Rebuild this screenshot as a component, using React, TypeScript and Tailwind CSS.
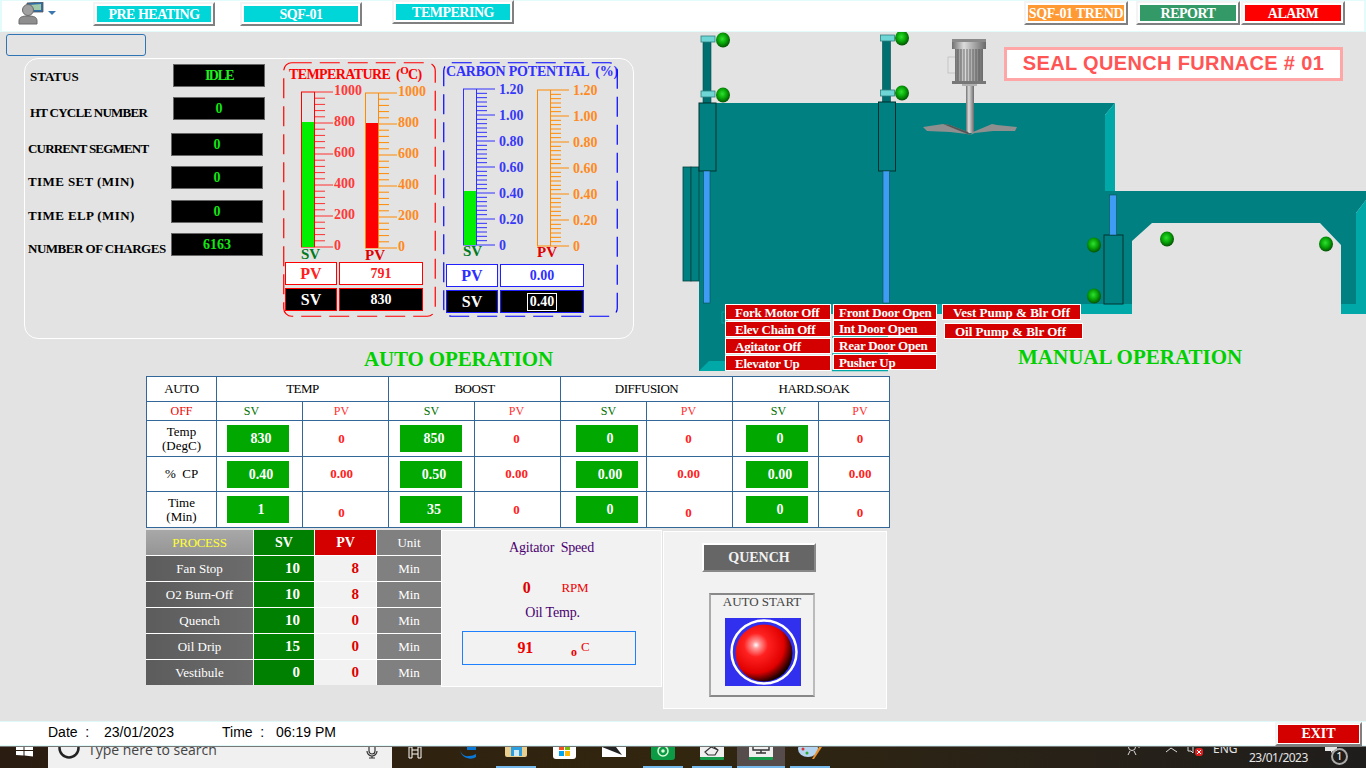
import type { ReactNode } from "react";

const serif = { fontFamily: '"Liberation Serif", "Times New Roman", serif' };

function HeadButton({ label, bg, className, tracking = "tracking-[-0.5px]" }: { label: string; bg: string; className: string; tracking?: string }) {
  return (
    <button
      className={`h-[24px] border-2 border-[#f4f4f4] border-r-[#808080] border-b-[#808080] p-[2px] ${className}`}
    >
      <span className={`flex h-full w-full items-center justify-center text-[14px] font-bold whitespace-nowrap text-white ${tracking} ${bg}`}>
        {label}
      </span>
    </button>
  );
}

function Ball({ cx, cy }: { cx: number; cy: number }) {
  return <ellipse cx={cx} cy={cy} rx={7} ry={7.5} fill="url(#ball)" />;
}

function Cylinder({ x, top, housingTop, housingBottom, rodBottom }: { x: number; top: number; housingTop: number; housingBottom: number; rodBottom: number }) {
  return (
    <g>
      <rect x={x + 4} y={top} width={8} height={housingTop - top} fill="#006f6f" stroke="#004d4d" strokeWidth={0.6} />
      <rect x={x + 2} y={top - 4} width={14} height={6} fill="#6fd6d6" stroke="#2f7f7f" strokeWidth={0.8} />
      <rect x={x + 2} y={housingTop - 12} width={14} height={6} fill="#6fd6d6" stroke="#2f7f7f" strokeWidth={0.8} />
      <rect x={x} y={housingTop} width={17} height={housingBottom - housingTop} fill="#008080" stroke="#00302f" strokeWidth={1} />
      <rect x={x + 4.5} y={housingBottom} width={6.5} height={rodBottom - housingBottom} fill="#3f9cf5" stroke="#0d4f4f" strokeWidth={0.6} />
    </g>
  );
}

// furnace body, cylinders and agitator, coordinates are page pixels minus the 680,32 origin
function FurnaceDrawing() {
  const o = (x: number, y: number) => `${x - 680},${y - 32}`;
  return (
    <svg width={686} height={344} className="block">
      <defs>
        <radialGradient id="ball" cx="45%" cy="42%" r="60%">
          <stop offset="0%" stopColor="#30e030" />
          <stop offset="50%" stopColor="#08a808" />
          <stop offset="100%" stopColor="#034c03" />
        </radialGradient>
        <linearGradient id="motor" x1="0" x2="1" y1="0" y2="0">
          <stop offset="0%" stopColor="#707070" />
          <stop offset="35%" stopColor="#dcdcdc" />
          <stop offset="100%" stopColor="#6a6a6a" />
        </linearGradient>
      </defs>
      {/* main tank */}
      <polygon
        points={[o(699, 103), o(1115, 103), o(1105, 115), o(1105, 191), o(1115, 191), o(1366, 191), o(1366, 200), o(1356, 213), o(1356, 304), o(1341, 304), o(1341, 245), o(1320, 223), o(1152, 223), o(1132, 241), o(1132, 304), o(699, 304)].join(" ")}
        fill="#008080"
      />
      <polygon points={[o(1105, 115), o(1115, 103), o(1115, 191), o(1105, 191)].join(" ")} fill="#00a8a8" />
      <polygon points={[o(1356, 213), o(1366, 200), o(1366, 314), o(1341, 314), o(1341, 304), o(1356, 304)].join(" ")} fill="#00a8a8" />
      <rect x={699 - 680} y={304 - 32} width={1132 - 699} height={10} fill="#00a8a8" />
      <polygon points={[o(699, 304), o(725, 304), o(725, 371), o(699, 371)].join(" ")} fill="#008080" />
      <polygon points={[o(699, 371), o(709, 361), o(725, 361), o(725, 371)].join(" ")} fill="#00a8a8" />
      <rect x={722 - 680} y={312 - 32} width={5} height={11} fill="none" stroke="#00a8a8" strokeWidth={0.8} />
      <polyline points={[o(832, 337), o(888, 337)].join(" ")} stroke="#00a8a8" strokeWidth={1.5} />
      <polyline points={[o(832, 354), o(888, 354)].join(" ")} stroke="#00a8a8" strokeWidth={1.5} />
      <polyline points={[o(832, 370.5), o(888, 370.5)].join(" ")} stroke="#00a8a8" strokeWidth={1.5} />

      {/* side doors */}
      <rect x={683 - 680} y={167 - 32} width={8} height={114} fill="#008080" stroke="#00403f" strokeWidth={0.8} />
      <rect x={691 - 680} y={167 - 32} width={8} height={114} fill="#008080" stroke="#00403f" strokeWidth={0.8} />

      <Cylinder x={19} top={8} housingTop={71} housingBottom={139} rodBottom={271} />
      <Cylinder x={198.5} top={7} housingTop={70} housingBottom={139} rodBottom={271} />
      <rect x={1104 - 680} y={235 - 32} width={19} height={69} fill="#008080" stroke="#00302f" strokeWidth={1} />
      <rect x={1109.5 - 680} y={195 - 32} width={7} height={40} fill="#3f9cf5" stroke="#0d4f4f" strokeWidth={0.6} />

      <Ball cx={43} cy={8} />
      <Ball cx={43} cy={63} />
      <Ball cx={222} cy={6} />
      <Ball cx={222} cy={61} />
      <Ball cx={414} cy={213} />
      <Ball cx={414} cy={264} />
      <Ball cx={487} cy={207} />
      <Ball cx={646} cy={212} />

      {/* agitator motor */}
      <rect x={268} y={25} width={9} height={16} fill="#e4e4e4" stroke="#a8a8a8" strokeWidth={0.5} />
      <rect x={272} y={7} width={34} height={3} fill="#8a8a8a" />
      <rect x={272} y={10} width={34} height={7} fill="url(#motor)" />
      <rect x={275} y={17} width={28} height={32} fill="url(#motor)" />
      {[278, 281, 284, 287, 290, 293, 296, 299].map((x) => (
        <line key={x} x1={x} x2={x} y1={17} y2={49} stroke="#555555" strokeWidth={0.8} />
      ))}
      <rect x={272} y={49} width={34} height={3} fill="#777777" />
      <rect x={282} y={52} width={15} height={2} fill="#b0b0b0" />
      <rect x={286} y={54} width={8} height={47} fill="url(#motor)" />
      <polygon points="243,95 263,92 270,93 288,100 290,103 287,102 270,100 247,99" fill="#8f8f8f" />
      <polygon points="337,95 317,93 312,92 293,100 290,103 295,101 313,99 335,99" fill="#8f8f8f" />
      <polygon points="263,92 270,93 288,100 290,103 280,99" fill="#555555" />
    </svg>
  );
}

function RedButton({ label, className }: { label: string; className: string }) {
  return (
    <div
      className={`absolute flex h-[16px] items-center border border-white bg-[#d40000] text-[13px] leading-none font-bold whitespace-nowrap text-white ${className}`}
    >
      {label}
    </div>
  );
}

function StatusRow({ label, value, labelClass, rowClass, valueClass = "text-[#14e614]" }: { label: string; value: string; labelClass: string; rowClass: string; valueClass?: string }) {
  return (
    <div className={`flex h-[23px] items-center ${rowClass}`}>
      <span className={`w-[143px] text-[13px] font-bold whitespace-nowrap text-black ${labelClass}`}>{label}</span>
      <span className={`flex h-[23px] w-[92px] items-center justify-center border border-[#666] bg-black text-[14px] font-bold ${valueClass}`}>
        {value}
      </span>
    </div>
  );
}

function Gauge({ labels, sub, majorGap, fillTo, fillColor, barColor, tickColor, labelColor, tag, tagColor, labelX, labelDy, tagDy }: { labels: string[]; sub: number; majorGap: number; fillTo: number; fillColor: string; barColor: string; tickColor: string; labelColor: string; tag: string; tagColor: string; labelX: number; labelDy: number; tagDy: number }) {
  const total = majorGap * (labels.length - 1);
  const ticks: ReactNode[] = [];
  for (let i = 0; i < labels.length; i++) {
    const y = 1 + i * majorGap;
    ticks.push(<line key={`m${i}`} x1={14} x2={32} y1={y} y2={y} stroke={tickColor} />);
    ticks.push(
      <text key={`t${i}`} x={labelX} y={y + labelDy} fill={labelColor} fontSize={14} fontWeight={700} style={serif}>
        {labels[i]}
      </text>,
    );
    if (i < labels.length - 1) {
      for (let s = 1; s < sub; s++) {
        const yy = y + (s * majorGap) / sub;
        ticks.push(<line key={`s${i}-${s}`} x1={14} x2={24} y1={yy} y2={yy} stroke={tickColor} />);
      }
    }
  }
  return (
    <svg width={60} height={total + 18} className="block shrink-0 overflow-visible">
      <rect x={0.5} y={1} width={13} height={total} fill="none" stroke={barColor} />
      {fillTo > 0 && <rect x={1} y={1 + fillTo} width={12} height={total - fillTo} fill={fillColor} />}
      {ticks}
      <text x={0} y={total + tagDy} fill={tagColor} fontSize={15} fontWeight={700} style={serif}>
        {tag}
      </text>
    </svg>
  );
}

function DashedFrame({ width, height, color }: { width: number; height: number; color: string }) {
  return (
    <svg width={width} height={height} className="pointer-events-none absolute top-0 left-0">
      <rect x={0.75} y={0.75} width={width - 1.5} height={height - 1.5} rx={8} fill="none" stroke={color} strokeWidth={1.2} strokeDasharray="20 8" />
    </svg>
  );
}

function ValueRow({ label, value, border, dark, text }: { label: string; value: ReactNode; border: string; dark?: boolean; text: string }) {
  const bg = dark ? "bg-black text-white" : `bg-white ${text}`;
  return (
    <div className="flex gap-[2px]">
      <div className={`flex h-[23px] w-[52px] items-center justify-center border-[1.5px] text-[16px] font-bold ${border} ${bg}`}>{label}</div>
      <div className={`flex h-[23px] w-[84px] items-center justify-center border-[1.5px] text-[14px] font-bold ${border} ${bg}`}>{value}</div>
    </div>
  );
}

const recipeCols = [
  { sv: "830", cp: "0.40", time: "1", ml: "ml-[10px]", svHead: "pr-[16px]", pvPad: "pr-[8px]", timePad: "pt-[6px]" },
  { sv: "850", cp: "0.50", time: "35", ml: "ml-[11px]", svHead: "", pvPad: "pr-[2px]", timePad: "pt-0" },
  { sv: "0", cp: "0.00", time: "0", ml: "ml-[15px]", svHead: "pl-[10px]", pvPad: "pr-[2px]", timePad: "pt-[6px]" },
  { sv: "0", cp: "0.00", time: "0", ml: "ml-[13px]", svHead: "pl-[6px]", pvPad: "pl-[12px]", timePad: "pt-[6px]" },
];

const cellBorder = "border-[1.5px] border-[#336699]";

function GreenCell({ value, ml, up }: { value: string; ml: string; up?: boolean }) {
  return (
    <td className={`${cellBorder} px-0 text-center align-middle`}>
      <div className={`flex h-[27px] w-[62px] items-center justify-center bg-[#00a800] pl-[6px] text-[14px] font-bold text-white ${ml} ${up ? "-mt-[1px]" : ""}`}>
        {value}
      </div>
    </td>
  );
}

function RecipeTable() {
  return (
    <table className="w-[743px] table-fixed border-collapse bg-white text-[14px] text-black">
      <colgroup>
        <col className="w-[70px]" />
        {[0, 1, 2, 3, 4, 5, 6].map((i) => (
          <col key={i} className="w-[86px]" />
        ))}
        <col className="w-[71px]" />
      </colgroup>
      <tbody>
        <tr className="h-[25px]">
          <td className={`${cellBorder} text-center text-[13px] tracking-[-0.4px]`}>AUTO</td>
          {["TEMP", "BOOST", "DIFFUSION"].map((h) => (
            <td key={h} colSpan={2} className={`${cellBorder} text-center text-[13px] tracking-[-0.5px]`}>
              {h}
            </td>
          ))}
          <td colSpan={2} className={`${cellBorder} pl-[6px] text-center text-[13px] tracking-[-0.5px]`}>
            HARD.SOAK
          </td>
        </tr>
        <tr className="h-[19px] text-[12px]">
          <td className={`${cellBorder} text-center text-[#f00000]`}>OFF</td>
          {recipeCols.map((c, i) => [
            <td key={`s${i}`} className={`${cellBorder} text-center text-[#007000] ${c.svHead}`}>SV</td>,
            <td key={`p${i}`} className={`${cellBorder} text-center text-[#ff3030] ${c.pvPad}`}>PV</td>,
          ])}
        </tr>
        <tr className="h-[36px]">
          <td className={`${cellBorder} text-center text-[13px] leading-[14px]`}>
            Temp
            <br />
            (DegC)
          </td>
          {recipeCols.map((c, i) => [
            <GreenCell key={`s${i}`} value={c.sv} ml={c.ml} />,
            <td key={`p${i}`} className={`${cellBorder} text-center text-[13px] font-bold text-[#ff2020] ${c.pvPad}`}>0</td>,
          ])}
        </tr>
        <tr className="h-[35px]">
          <td className={`${cellBorder} text-center text-[13px] whitespace-pre`}>%  CP</td>
          {recipeCols.map((c, i) => [
            <GreenCell key={`s${i}`} value={c.cp} ml={c.ml} />,
            <td key={`p${i}`} className={`${cellBorder} text-center text-[13px] font-bold text-[#ff2020] ${c.pvPad}`}>0.00</td>,
          ])}
        </tr>
        <tr className="h-[36px]">
          <td className={`${cellBorder} text-center text-[13px] leading-[14px]`}>
            Time
            <br />
            (Min)
          </td>
          {recipeCols.map((c, i) => [
            <GreenCell key={`s${i}`} value={c.time} ml={c.ml} up={i === 0} />,
            <td key={`p${i}`} className={`${cellBorder} text-center text-[13px] font-bold text-[#ff2020] ${c.pvPad} ${c.timePad}`}>0</td>,
          ])}
        </tr>
      </tbody>
    </table>
  );
}

const processRows = [
  { name: "Fan Stop", sv: "10", pv: "8" },
  { name: "O2 Burn-Off", sv: "10", pv: "8" },
  { name: "Quench", sv: "10", pv: "0" },
  { name: "Oil Drip", sv: "15", pv: "0" },
  { name: "Vestibule", sv: "0", pv: "0" },
];

function ProcessTable() {
  return (
    <div className="grid w-[295px] grid-cols-[107px_60px_61px_64px] gap-px bg-white text-[13px] text-white">
      <div className="flex h-[25px] items-center justify-center bg-gradient-to-b from-[#a8a8a8] to-[#959595] tracking-[-0.3px] text-[#ffff33]">PROCESS</div>
      <div className="flex h-[25px] items-center justify-center bg-[#008000] text-[14px] font-bold">SV</div>
      <div className="flex h-[25px] items-center justify-center bg-[#d40000] text-[14px] font-bold">PV</div>
      <div className="flex h-[25px] items-center justify-center bg-[#808080]">Unit</div>
      {processRows.map((r) => [
        <div key={`${r.name}-n`} className="flex h-[25px] items-center justify-center bg-gradient-to-r from-[#5c5c5c] to-[#6c6c6c]">{r.name}</div>,
        <div key={`${r.name}-s`} className="flex h-[25px] items-center justify-end bg-[#008000] pr-[14px] text-[15px] font-bold">{r.sv}</div>,
        <div key={`${r.name}-p`} className="flex h-[25px] items-center justify-end bg-[#f2f2f2] pr-[17px] text-[15px] font-bold text-[#dd0000]">{r.pv}</div>,
        <div key={`${r.name}-u`} className="flex h-[25px] items-center justify-center bg-[#808080]">Min</div>,
      ])}
    </div>
  );
}

function AgitatorPanel() {
  return (
    <div className="flex h-[157px] w-[221px] flex-col items-center border border-white bg-[#f2f2f2] text-[14px] tracking-[-0.2px] text-[#4b0070]">
      <div className="mt-[6px] whitespace-pre">Agitator  Speed</div>
      <div className="mt-[18px] ml-[8px] flex items-baseline">
        <span className="text-[16px] font-bold text-[#dd0000]">0</span>
        <span className="relative -top-[1px] ml-[31px] text-[13px] text-[#f00000]">RPM</span>
      </div>
      <div className="mt-[2px] ml-[2px]">Oil Temp.</div>
      <div className="mt-[8px] ml-[-6px] flex h-[34px] w-[174px] items-center border border-[#1e80ff] pl-[55px] text-[#ee0000]">
        <span className="text-[16px] font-bold">91</span>
        <span className="ml-[38px] text-[13px]">
          <span className="relative top-[4px] text-[12px] font-bold">o</span>
          <span className="relative -top-[1px] ml-[4px]">C</span>
        </span>
      </div>
    </div>
  );
}

function QuenchPanel() {
  return (
    <div className="mt-[1px] ml-px flex h-[178px] w-[224px] flex-col border border-white bg-[#f2f2f2]">
      <button className="mt-[11px] ml-[38px] flex h-[29px] w-[114px] items-center justify-center border-2 border-white border-r-[#888] border-b-[#888] bg-[#666] text-[14px] font-bold text-[#f2f2f2]">
        QUENCH
      </button>
      <div className="mt-[21px] ml-[45px] flex h-[104px] w-[106px] flex-col items-center border-2 border-t-[#888] border-r-[#bbb] border-b-[#888] border-l-[#aaa]">
        <div className="-mt-[1px] text-[13px] leading-[16px] text-[#444]">AUTO START</div>
        <svg width={76} height={68} className="mt-[8px] ml-[2px]">
          <defs>
            <radialGradient id="lamp" cx="36%" cy="36%" r="70%">
              <stop offset="0%" stopColor="#ffffff" />
              <stop offset="9%" stopColor="#ff9a9a" />
              <stop offset="30%" stopColor="#ff2020" />
              <stop offset="70%" stopColor="#e00000" />
              <stop offset="92%" stopColor="#300000" />
              <stop offset="100%" stopColor="#000000" />
            </radialGradient>
          </defs>
          <rect width={76} height={68} fill="#3030ee" />
          <ellipse cx={39} cy={34} rx={32.5} ry={31.5} fill="none" stroke="#ffffff" strokeWidth={2.5} />
          <ellipse cx={39} cy={35} rx={28.5} ry={28.5} fill="url(#lamp)" />
        </svg>
      </div>
    </div>
  );
}

function TaskIcon({ className, children }: { className?: string; children: ReactNode }) {
  return <div className={`absolute top-0 overflow-hidden ${className ?? ""}`}>{children}</div>;
}

// windows taskbar is cut off by the window bottom, only the lower part of each icon shows
function Taskbar() {
  const tray = { fontFamily: '"Noto Sans", sans-serif' };
  return (
    <div className="relative h-[22px] w-full overflow-hidden border-t border-[#777] bg-gradient-to-r from-[#2a1c10] via-[#32260f] to-[#1f1d1c]">
      <svg width={17} height={10} className="absolute top-0 left-[16px]">
        <path d="M0 0h7.5v3H0zM8.5 0H17v3H8.5zM0 4h7.5v4.5L0 8zM8.5 4H17v5.5l-8.5-1z" fill="#fff" />
      </svg>
      <div className="absolute top-0 left-[48px] h-[22px] w-[344px] bg-[#f0f0f0]">
        <svg width={24} height={14} className="absolute top-0 left-[9px]">
          <circle cx={12} cy={1} r={9.5} fill="none" stroke="#222" strokeWidth={2.5} />
        </svg>
        <span className="absolute top-[-8px] left-[40px] text-[14px] text-[#444]" style={{ fontFamily: '"Open Sans", sans-serif' }}>
          Type here to search
        </span>
        <svg width={12} height={12} className="absolute top-0 left-[318px]">
          <path d="M3 0v4a3 3 0 0 0 6 0V0M1 4a5 5 0 0 0 10 0M6 9v2M3 11h6" fill="none" stroke="#333" strokeWidth={1.2} />
        </svg>
      </div>
      <TaskIcon className="left-[408px]">
        <svg width={14} height={12}>
          <path d="M1 0h3v11H1zM10 0h3v11h-3zM4 3h6M4 7h6" stroke="#fff" fill="none" />
        </svg>
      </TaskIcon>
      <TaskIcon className="left-[459px]">
        <svg width={18} height={12}>
          <path d="M0 0c1 6 5 10 10 9 3 0 5-1 7-2v3c-3 2-6 2-9 1-4-1-7-5-8-11zM8 0h9v3H8z" fill="#0a78d7" />
        </svg>
      </TaskIcon>
      <TaskIcon className="left-[505px]">
        <div className="h-[10px] w-[22px] rounded-b-[2px] bg-[#e8cf8f]">
          <div className="ml-[6px] h-[9px] w-[11px] border-[3px] border-b-0 border-[#2b9fe0] bg-[#cfe9f7]" />
        </div>
      </TaskIcon>
      <TaskIcon className="left-[553px]">
        <div className="relative h-[12px] w-[23px] rounded-b-[3px] bg-white">
          <div className="absolute -top-[1px] left-[6px] h-[4px] w-[5px] bg-[#f25022]" />
          <div className="absolute -top-[1px] left-[12px] h-[4px] w-[5px] bg-[#7fba00]" />
          <div className="absolute top-[4px] left-[6px] h-[5px] w-[5px] bg-[#00a4ef]" />
          <div className="absolute top-[4px] left-[12px] h-[5px] w-[5px] bg-[#ffb900]" />
        </div>
      </TaskIcon>
      <TaskIcon className="left-[602px]">
        <svg width={24} height={10}>
          <rect width={24} height={10} fill="#fff" />
          <path d="M0 0h14l6 8z" fill="#222" />
        </svg>
      </TaskIcon>
      <TaskIcon className="left-[651px]">
        <svg width={24} height={13}>
          <rect y={-4} width={24} height={17} rx={3} fill="#0d9a45" />
          <circle cx={12} cy={4} r={5} fill="none" stroke="#d8ffd8" strokeWidth={1.5} />
          <circle cx={12} cy={4} r={1.8} fill="#d8ffd8" />
        </svg>
      </TaskIcon>
      <div className="absolute top-0 left-[737px] h-[21px] w-[48px] bg-[#564c4c]" />
      <TaskIcon className="left-[700px]">
        <svg width={24} height={13}>
          <rect width={24} height={10} fill="#efefef" />
          <rect y={10} width={24} height={3} rx={1} fill="#149c4a" />
          <path d="M5 5l6-5 7 3-3 5H8zM14 0l4 3" fill="none" stroke="#333" strokeWidth={1.2} />
        </svg>
      </TaskIcon>
      <TaskIcon className="left-[749px]">
        <svg width={24} height={13}>
          <rect width={24} height={10} fill="#efefef" />
          <rect y={10} width={24} height={3} rx={1} fill="#149c4a" />
          <path d="M4 0v3h16V0M12 3v3M7 6h10" fill="none" stroke="#333" strokeWidth={1.4} />
        </svg>
      </TaskIcon>
      <TaskIcon className="left-[798px]">
        <svg width={26} height={13}>
          <ellipse cx={10} cy={2} rx={10} ry={8} fill="#b5d4f0" />
          <circle cx={5} cy={2} r={1.5} fill="#d33" />
          <circle cx={9} cy={6} r={1.5} fill="#3a3" />
          <path d="M21 0l-7 12 2 0 8-12z" fill="#e8912d" />
        </svg>
      </TaskIcon>
      {[
        { x: "left-[496px] w-[40px]" },
        { x: "left-[643px] w-[40px]" },
        { x: "left-[692px] w-[40px]" },
        { x: "left-[737px] w-[48px]" },
        { x: "left-[790px] w-[40px]" },
      ].map((u) => (
        <div key={u.x} className={`absolute bottom-0 h-[2px] bg-[#76b9ed] ${u.x}`} />
      ))}
      <svg width={20} height={10} className="absolute top-0 left-[1127px]">
        <circle cx={5} cy={0} r={3.5} fill="none" stroke="#ddd" />
        <path d="M1 8l2-4M9 8l-2-4M12 0v1" fill="none" stroke="#ddd" strokeWidth={1} />
      </svg>
      <svg width={13} height={6} className="absolute top-[0px] left-[1165px]">
        <path d="M1 5l5-4 6 4" fill="none" stroke="#ddd" />
      </svg>
      <svg width={18} height={12} className="absolute top-0 left-[1186px]">
        <path d="M2 0v4h3l2 2V0" fill="none" stroke="#ddd" />
        <rect x={9} y={1} width={8} height={8} rx={3} fill="#e02020" />
        <path d="M11 3l4 4M15 3l-4 4" stroke="#fff" strokeWidth={1} />
      </svg>
      <span className="absolute top-[-7px] left-[1213px] text-[12px] text-[#e4e4e4]" style={tray}>ENG</span>
      <span className="absolute top-[2px] left-[1249px] text-[12px] tracking-[-0.5px] text-[#e4e4e4]" style={tray}>23/01/2023</span>
      <svg width={14} height={7} className="absolute top-0 left-[1325px]">
        <path d="M0 0h12v4H8l-2 2V4H0z" fill="#e8e8e8" />
      </svg>
      <div className="absolute top-px left-[1331px] flex h-[17px] w-[17px] items-center justify-center rounded-full border-2 border-[#aaa] text-[11px] text-white" style={tray}>1</div>
    </div>
  );
}

export default function App() {
  return (
    <div className="flex h-[768px] w-[1366px] flex-col overflow-hidden bg-[#e3e3e3]" style={serif}>
      <header className="flex h-[32px] shrink-0 items-start border-x-2 border-y border-[#e4fbfb] bg-white">
        <svg width={40} height={24} className="mt-px ml-[16px]">
          <polygon points="9,1 25,0 25,10 9,10" fill="#2f6ea8" stroke="#555" strokeWidth={0.8} />
          <polygon points="11,3 23,2 23,8 11,8" fill="#9fc9a8" />
          <circle cx={10} cy={8} r={5.5} fill="#a0a0a0" stroke="#6a6a6a" />
          <path d="M1 22v-3c0-4 3-5 9-5s9 1 9 5v3z" fill="#8e8e8e" stroke="#6a6a6a" />
          <path d="M30 9h8l-4 4z" fill="#3b78b0" />
        </svg>
        <HeadButton label="PRE HEATING" bg="bg-[#00d5d8]" className="mt-px ml-[35px] w-[122px]" />
        <HeadButton label="SQF-01" bg="bg-[#00d5d8]" className="mt-px ml-[25px] w-[122px]" />
        <HeadButton label="TEMPERING" bg="bg-[#00d5d8]" className="-mt-px ml-[30px] w-[122px]" />
        <div className="flex-1" />
        <HeadButton label="SQF-01 TREND" bg="bg-[#ff9933]" className="w-[104px]" tracking="tracking-[-0.3px]" />
        <HeadButton label="REPORT" bg="bg-[#339966]" className="ml-[8px] w-[104px]" />
        <HeadButton label="ALARM" bg="bg-[#ff0000]" className="ml-px w-[104px]" />
        <div className="w-[19px]" />
      </header>

      <main className="min-h-0 flex-1">
        <div className="flex h-[344px]">
          <div className="w-[680px] shrink-0">
            <div className="mt-[2px] ml-[6px] h-[22px] w-[140px] rounded-[3px] border border-[#2e75b6]" />
            <div className="mt-[2px] ml-[24px] flex h-[281px] w-[610px] rounded-[14px] border border-white">
              <div className="w-[258px] shrink-0">
                <StatusRow rowClass="mt-[5px]" label="STATUS" labelClass="mt-[2px] ml-[5px]" value="IDLE" valueClass="tracking-[-1.5px] text-[#22ee22]" />
                <StatusRow rowClass="mt-[10px]" label="HT CYCLE NUMBER" labelClass="mt-[8px] ml-[5px] tracking-[-0.75px]" value="0" />
                <StatusRow rowClass="mt-[13px]" label="CURRENT SEGMENT" labelClass="mt-[8px] ml-[3px] tracking-[-0.8px]" value="0" />
                <StatusRow rowClass="mt-[10px]" label="TIME SET (MIN)" labelClass="mt-[8px] ml-[3px] tracking-[0.4px]" value="0" />
                <StatusRow rowClass="mt-[11px]" label="TIME ELP (MIN)" labelClass="mt-[8px] ml-[3px] tracking-[0.4px]" value="0" />
                <StatusRow rowClass="mt-[10px]" label="NUMBER OF CHARGES" labelClass="mt-[8px] ml-[3px] tracking-[-0.5px]" value="6163" />
              </div>
              <div className="relative mt-[3px] h-[255px] w-[153px] shrink-0">
                <DashedFrame width={153} height={255} color="#ff0000" />
                <div className="mt-[4px] ml-[6px] text-[14px] leading-[18px] font-bold tracking-[-0.6px] whitespace-pre text-[#ff0000]">
                  TEMPERATURE  (<sup className="text-[11px]">O</sup>C)
                </div>
                <div className="mt-[7px] ml-[18px] flex gap-[4px]">
                  <Gauge labels={["1000", "800", "600", "400", "200", "0"]} sub={5} majorGap={31} fillTo={30} fillColor="#00f000" barColor="#ff0000" tickColor="#ff3030" labelColor="#ff3838" tag="SV" tagColor="#007a20" labelX={33} labelDy={3} tagDy={13} />
                  <div className="mt-px">
                    <Gauge labels={["1000", "800", "600", "400", "200", "0"]} sub={5} majorGap={31} fillTo={30} fillColor="#ff0000" barColor="#ff8a00" tickColor="#ff8a00" labelColor="#ff8a1e" tag="PV" tagColor="#e00000" labelX={33} labelDy={3} tagDy={13} />
                  </div>
                </div>
                <div className="absolute top-[200px] left-[2px] flex flex-col gap-[3px]">
                  <ValueRow label="PV" value="791" border="border-[#ff0000]" text="text-[#ff2020]" />
                  <ValueRow label="SV" value="830" border="border-[#ff0000]" text="text-[#ff2020]" dark />
                </div>
              </div>
              <div className="relative mt-[3px] ml-[7px] h-[255px] w-[175px] shrink-0">
                <DashedFrame width={175} height={255} color="#0000ff" />
                <div className="mt-[1px] ml-[3px] text-[14px] leading-[18px] font-bold tracking-[-0.2px] whitespace-pre text-[#3030ff]">
                  CARBON POTENTIAL  (%)
                </div>
                <div className="mt-[7px] ml-[20px] flex gap-[14px]">
                  <Gauge labels={["1.20", "1.00", "0.80", "0.60", "0.40", "0.20", "0"]} sub={6} majorGap={26} fillTo={102} fillColor="#00f000" barColor="#3030ff" tickColor="#3030ff" labelColor="#3838f8" tag="SV" tagColor="#007a20" labelX={36} labelDy={4.5} tagDy={12} />
                  <div className="mt-px">
                    <Gauge labels={["1.20", "1.00", "0.80", "0.60", "0.40", "0.20", "0"]} sub={6} majorGap={26} fillTo={0} fillColor="#ff0000" barColor="#ff8a00" tickColor="#ff8a00" labelColor="#ff8a1e" tag="PV" tagColor="#e00000" labelX={36} labelDy={4.5} tagDy={12} />
                  </div>
                </div>
                <div className="absolute top-[202px] left-[3px] flex flex-col gap-[3px]">
                  <ValueRow label="PV" value="0.00" border="border-[#2020ff]" text="text-[#2f2fff]" />
                  <ValueRow label="SV" value={<span className="border border-white px-[2px] leading-[16px]">0.40</span>} border="border-[#2020ff]" text="text-[#2f2fff]" dark />
                </div>
              </div>
            </div>
            <div className="mt-[8px] ml-[364px] text-[21px] leading-[24px] font-bold tracking-[-0.15px] whitespace-nowrap text-[#00cf00]">AUTO OPERATION</div>
          </div>

          <div className="relative min-w-0 flex-1">
            <FurnaceDrawing />
            <div className="absolute top-[15px] left-[324px] flex h-[34px] w-[339px] items-center justify-center border-[3px] border-[#ffa6a6] bg-white pb-[2px] text-[20px] font-bold tracking-[0.35px] whitespace-nowrap text-[#ff5555]" style={{ fontFamily: '"Liberation Sans", Arial, sans-serif' }}>
              SEAL QUENCH FURNACE # 01
            </div>
            <RedButton label="Fork Motor Off" className="top-[272px] left-[45px] w-[106px] pl-[9px] tracking-[-0.25px]" />
            <RedButton label="Elev Chain Off" className="top-[289px] left-[45px] w-[106px] pl-[9px] tracking-[-0.25px]" />
            <RedButton label="Agitator Off" className="top-[306px] left-[45px] w-[106px] pl-[9px] tracking-[-0.25px]" />
            <RedButton label="Elevator Up" className="top-[323px] left-[45px] w-[106px] pl-[9px] tracking-[-0.25px]" />
            <RedButton label="Front Door Open" className="top-[272px] left-[153px] w-[104px] pl-[5px] tracking-[-0.25px]" />
            <RedButton label="Int Door Open" className="top-[288px] left-[153px] w-[104px] pl-[5px] tracking-[-0.25px]" />
            <RedButton label="Rear Door Open" className="top-[305px] left-[153px] w-[104px] pl-[5px] tracking-[-0.25px]" />
            <RedButton label="Pusher Up" className="top-[322px] left-[153px] w-[104px] pl-[5px] tracking-[-0.25px]" />
            <RedButton label="Vest Pump & Blr Off" className="top-[272px] left-[262px] w-[139px] pl-[10px]" />
            <RedButton label="Oil Pump & Blr Off" className="top-[291px] left-[264px] w-[139px] pl-[10px]" />
            <div className="absolute top-[313px] left-[338px] text-[21px] leading-[24px] font-bold whitespace-nowrap text-[#00cf00]">MANUAL OPERATION</div>
          </div>
        </div>

        <div className="ml-[146px]">
          <RecipeTable />
          <div className="mt-[2px] flex items-start">
            <ProcessTable />
            <AgitatorPanel />
            <QuenchPanel />
          </div>
        </div>
      </main>

      <footer className="relative flex h-[25px] shrink-0 items-center border-y border-[#dff8f8] bg-white text-[14px] text-black" style={{ fontFamily: '"Liberation Sans", Arial, sans-serif' }}>
        <span className="mb-[3px] ml-[48px] w-[56px] whitespace-pre">Date  :</span>
        <span className="mb-[3px] w-[118px]">23/01/2023</span>
        <span className="mb-[3px] w-[54px] whitespace-pre">Time  :</span>
        <span className="mb-[3px]">06:19 PM</span>
        <div className="flex-1" />
        <button className="mr-[4px] h-[24px] w-[87px] border-2 border-[#f4f4f4] border-r-[#808080] border-b-[#808080] p-[1px]" style={serif}>
          <span className="flex h-full w-full items-center justify-center bg-[#d40000] text-[14px] font-bold text-white">EXIT</span>
        </button>
      </footer>
      <Taskbar />
    </div>
  );
}
